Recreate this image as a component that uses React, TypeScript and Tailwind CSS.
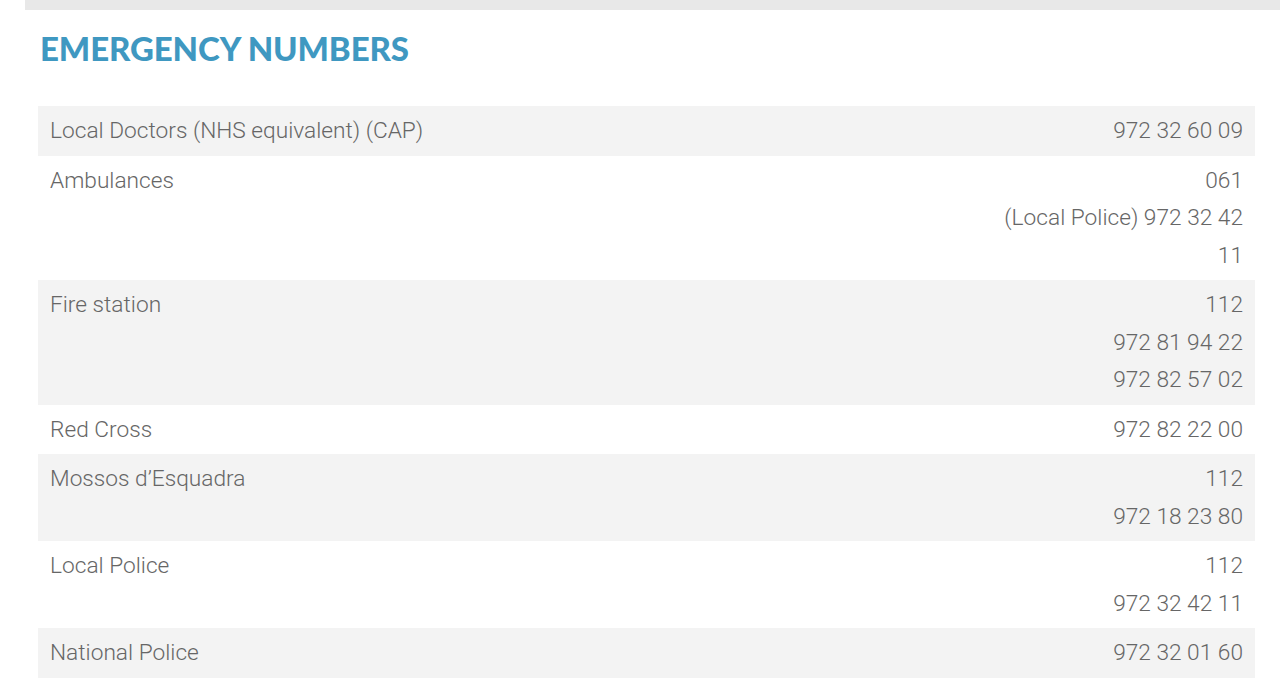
const rows: { name: string; numbers: string[] }[] = [
  { name: "Local Doctors (NHS equivalent) (CAP)", numbers: ["972 32 60 09"] },
  { name: "Ambulances", numbers: ["061", "(Local Police) 972 32 42", "11"] },
  { name: "Fire station", numbers: ["112", "972 81 94 22", "972 82 57 02"] },
  { name: "Red Cross", numbers: ["972 82 22 00"] },
  { name: "Mossos d\u2019Esquadra", numbers: ["112", "972 18 23 80"] },
  { name: "Local Police", numbers: ["112", "972 32 42 11"] },
  { name: "National Police", numbers: ["972 32 01 60"] },
]

export default function App() {
  return (
    <div className="min-h-[689px] bg-white font-['Roboto',sans-serif]">
      {/* top strip */}
      <div className="ml-[25px] h-[10px] bg-[#e8e8e8]" />

      <div className="pl-[38px] pr-[25px]">
        <h2 className="mt-[18px] pl-[2px] font-['Lato',sans-serif] text-[33px] font-black leading-[40px] tracking-[-0.1px] text-[#3f98c1]">
          EMERGENCY NUMBERS
        </h2>

        {/* numbers table */}
        <div className="mt-[38px]">
          {rows.map((row, i) => (
            <div
              key={row.name}
              className={`flex justify-between px-[12px] py-[6px] text-[22.7px] font-light leading-[37.5px] text-[#666666] ${
                i % 2 === 0 ? "bg-[#f3f3f3]" : "bg-white"
              }`}
            >
              <div>{row.name}</div>
              <div className="text-right">
                {row.numbers.map((n) => (
                  <div key={n}>{n}</div>
                ))}
              </div>
            </div>
          ))}
        </div>
      </div>
    </div>
  )
}
